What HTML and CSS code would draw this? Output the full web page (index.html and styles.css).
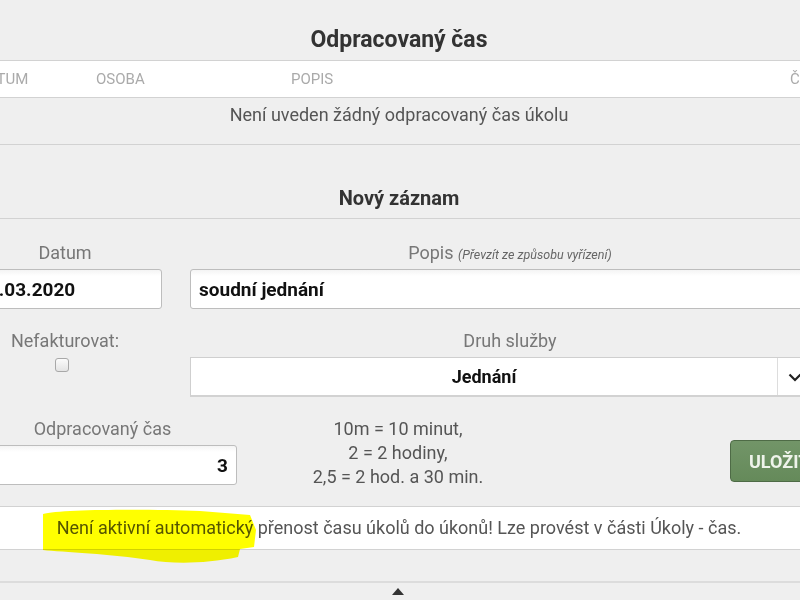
FILE: index.html
```html
<!DOCTYPE html>
<html lang="cs">
<head>
  <meta charset="UTF-8">
  <meta name="viewport" content="width=device-width, initial-scale=1.0">
  <title>Odpracovaný čas</title>
  <link rel="stylesheet" href="styles.css">
</head>
<body>
  <div class="page">
    <section class="worked">
      <h2 class="section-title">Odpracovaný čas</h2>
      <div class="time-table">
        <div class="table-head">
          <span>Datum</span>
          <span>Osoba</span>
          <span>Popis</span>
          <span>Čas</span>
        </div>
        <div class="table-empty">Není uveden žádný odpracovaný čas úkolu</div>
      </div>
    </section>

    <section class="new-entry">
      <h2 class="section-title">Nový záznam</h2>

      <div class="form">
        <div class="form-row two-cols">
          <div class="field">
            <label>Datum</label>
            <input class="input" type="text" value="24.03.2020">
          </div>
          <div class="field">
            <label>Popis <em class="hint-link">(Převzít ze způsobu vyřízení)</em></label>
            <input class="input" type="text" value="soudní jednání">
          </div>
        </div>

        <div class="form-row two-cols">
          <div class="field">
            <label>Nefakturovat:</label>
            <span class="checkbox"></span>
          </div>
          <div class="field">
            <label>Druh služby</label>
            <div class="select">
              <span class="select-value">Jednání</span>
              <span class="select-arrow">
                <svg width="14" height="10" viewBox="0 0 14 10"><path d="M1.5 2.5 L7 8 L12.5 2.5" fill="none" stroke="#222" stroke-width="2.2"/></svg>
              </span>
            </div>
          </div>
        </div>

        <div class="form-row three-cols">
          <div class="field">
            <label>Odpracovaný čas</label>
            <input class="input num" type="text" value="3">
          </div>
          <div class="time-help">
            10m = 10 minut,<br>
            2 = 2 hodiny,<br>
            2,5 = 2 hod. a 30 min.
          </div>
          <button class="save-btn">Uložit</button>
        </div>
      </div>

      <div class="notice">
        Není aktivní automatický přenost času úkolů do úkonů! Lze provést v části Úkoly - čas.
        <svg class="marker" width="300" height="70" viewBox="0 0 300 70">
          <path d="M43 8 C60 3 150 3 200 5 L250 9 L256 24 L254 41 L240 43 L238 51 C205 58 172 58 150 54 C112 48 62 46 43 44 Z" fill="#ffff00"/>
        </svg>
      </div>

      <div class="collapse">
        <span class="collapse-arrow"></span>
      </div>
    </section>
  </div>
</body>
</html>
```

FILE: styles.css
```css
* {
  box-sizing: border-box;
  margin: 0;
  padding: 0;
}

body {
  font-family: Roboto, 'Liberation Sans', sans-serif;
  font-size: 18px;
  background: #efefef;
  color: #555;
  overflow: hidden;
}

.page {
  width: 862px;
  margin-left: -32px;
}

.section-title {
  text-align: center;
  line-height: 24px;
  font-weight: bold;
  color: #333;
}

.worked .section-title {
  font-size: 23px;
  margin: 28px 0 8px;
}

.time-table {
  border-top: 1px solid #d2d2d2;
  border-bottom: 1px solid #d2d2d2;
}

.table-head {
  display: grid;
  grid-template-columns: 128px 195px 499px 1fr;
  background: #fff;
  border-bottom: 1px solid #d2d2d2;
  height: 37px;
  align-items: center;
  color: #aaa;
  font-size: 15px;
  text-transform: uppercase;
}

.table-head span:first-child {
  padding-left: 10px;
}

.table-empty {
  text-align: center;
  line-height: 20px;
  padding: 7px 0 19px;
  color: #555;
}

.new-entry .section-title {
  font-size: 20px;
  margin: 41px 0 8px;
}

.form {
  border-top: 1px solid #d2d2d2;
  padding-top: 24px;
}

.form-row {
  display: grid;
  column-gap: 28px;
  margin-bottom: 22px;
}

.two-cols {
  grid-template-columns: 194px 1fr;
}

.three-cols {
  grid-template-columns: 269px 322px 1fr;
  column-gap: 0;
  margin-bottom: 21px;
}

.field {
  display: flex;
  flex-direction: column;
  align-items: center;
}

.field label {
  line-height: 20px;
  margin-bottom: 6px;
  color: #777;
}

.hint-link {
  font-size: 12.5px;
  line-height: 1;
  color: #666;
}

.input {
  width: 100%;
  height: 40px;
  border: 1px solid #bdbdbd;
  border-radius: 3px;
  background: linear-gradient(#f4f4f4, #fff 6px);
  padding: 0 8px;
  font-family: inherit;
  font-size: 19px;
  font-weight: bold;
  color: #111;
  outline: none;
}

.input.num {
  text-align: right;
}

.checkbox {
  width: 14px;
  height: 14px;
  margin-top: 1px;
  margin-right: 6px;
  border: 1px solid #a8a8a8;
  border-radius: 3px;
  background: linear-gradient(#fbfbfb, #e4e4e4);
}

.select {
  width: 100%;
  height: 40px;
  display: flex;
  background: #fff;
  border-top: 1px solid #cfcfcf;
  border-bottom: 2px solid #d2d2d2;
  border-left: 1px solid #cfcfcf;
}

.select-value {
  flex: 1;
  display: flex;
  align-items: center;
  justify-content: center;
  font-weight: bold;
  color: #111;
}

.select-arrow {
  width: 53px;
  border-left: 1px solid #ddd;
  display: flex;
  align-items: center;
  padding-left: 10px;
}

.time-help {
  text-align: center;
  line-height: 24px;
  margin: -2px 0 -6px;
  color: #555;
}

.save-btn {
  justify-self: end;
  align-self: end;
  margin-bottom: 3px;
  height: 42px;
  width: 100px;
  border: 1px solid #4e6b46;
  border-radius: 4px;
  background: linear-gradient(#729568, #658a5a);
  color: #eef3ea;
  font-family: inherit;
  font-size: 18px;
  font-weight: bold;
  text-transform: uppercase;
  text-align: left;
  padding-left: 18px;
}

.notice {
  position: relative;
  background: #fff;
  border-top: 1px solid #d2d2d2;
  border-bottom: 1px solid #d2d2d2;
  height: 44px;
  line-height: 42px;
  text-align: center;
  color: #555;
}

.marker {
  position: absolute;
  left: 32px;
  top: -1px;
  mix-blend-mode: multiply;
}

.collapse {
  margin-top: 31px;
  border-top: 2px solid #dcdcdc;
  display: flex;
  justify-content: center;
  padding-top: 5px;
  padding-right: 3px;
}

.collapse-arrow {
  width: 0;
  height: 0;
  border-left: 6px solid transparent;
  border-right: 6px solid transparent;
  border-bottom: 7px solid #333;
}
```
